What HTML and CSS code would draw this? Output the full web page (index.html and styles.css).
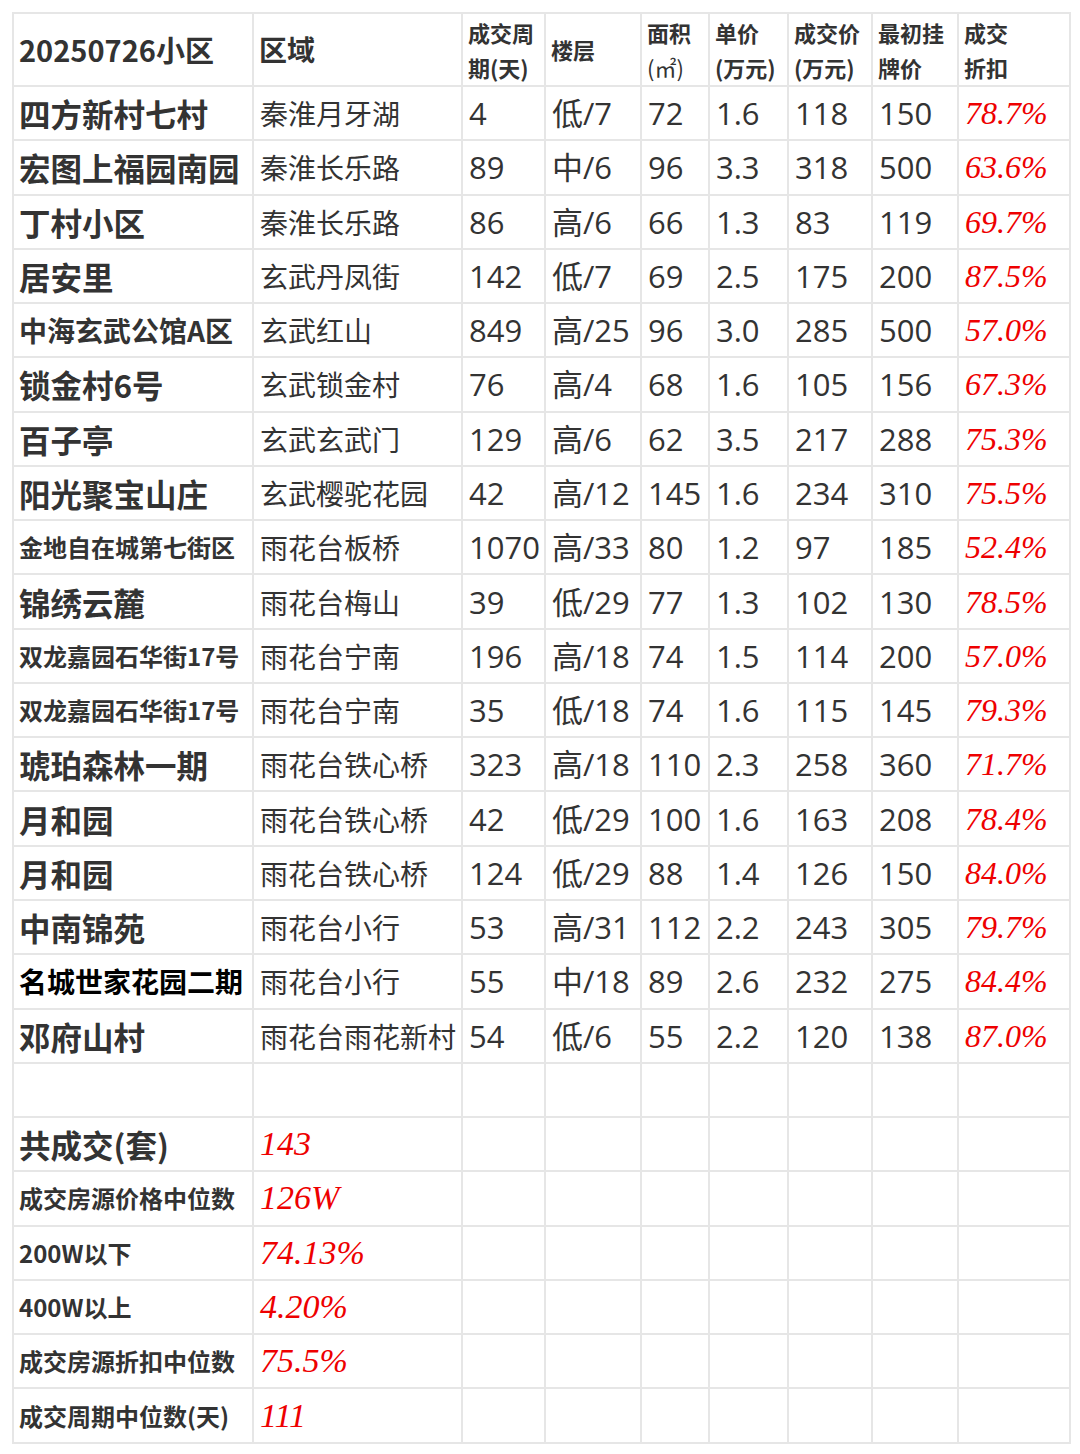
FILE: index.html
```html
<!DOCTYPE html>
<html lang="zh-CN">
<head>
<meta charset="utf-8">
<title>20250726小区成交</title>
<link rel="stylesheet" href="styles.css">
</head>
<body>
<table class="deals">
<colgroup>
<col class="c-name"><col class="c-area"><col class="c-cycle"><col class="c-floor"><col class="c-size"><col class="c-unit"><col class="c-price"><col class="c-list"><col class="c-disc">
</colgroup>
<thead>
<tr class="head">
<th class="h-big">20250726小区</th>
<th class="h-big">区域</th>
<th>成交周<br>期(天)</th>
<th>楼层</th>
<th>面积<br><span class="sq">(㎡)</span></th>
<th>单价<br>(万元)</th>
<th>成交价<br>(万元)</th>
<th>最初挂<br>牌价</th>
<th>成交<br>折扣</th>
</tr>
</thead>
<tbody>
<tr><td class="name">四方新村七村</td><td class="area">秦淮月牙湖</td><td>4</td><td>低/7</td><td>72</td><td>1.6</td><td>118</td><td>150</td><td class="pct">78.7%</td></tr>
<tr><td class="name">宏图上福园南园</td><td class="area">秦淮长乐路</td><td>89</td><td>中/6</td><td>96</td><td>3.3</td><td>318</td><td>500</td><td class="pct">63.6%</td></tr>
<tr><td class="name">丁村小区</td><td class="area">秦淮长乐路</td><td>86</td><td>高/6</td><td>66</td><td>1.3</td><td>83</td><td>119</td><td class="pct">69.7%</td></tr>
<tr><td class="name">居安里</td><td class="area">玄武丹凤街</td><td>142</td><td>低/7</td><td>69</td><td>2.5</td><td>175</td><td>200</td><td class="pct">87.5%</td></tr>
<tr><td class="name mid">中海玄武公馆A区</td><td class="area">玄武红山</td><td>849</td><td>高/25</td><td>96</td><td>3.0</td><td>285</td><td>500</td><td class="pct">57.0%</td></tr>
<tr><td class="name">锁金村6号</td><td class="area">玄武锁金村</td><td>76</td><td>高/4</td><td>68</td><td>1.6</td><td>105</td><td>156</td><td class="pct">67.3%</td></tr>
<tr><td class="name">百子亭</td><td class="area">玄武玄武门</td><td>129</td><td>高/6</td><td>62</td><td>3.5</td><td>217</td><td>288</td><td class="pct">75.3%</td></tr>
<tr><td class="name">阳光聚宝山庄</td><td class="area">玄武樱驼花园</td><td>42</td><td>高/12</td><td>145</td><td>1.6</td><td>234</td><td>310</td><td class="pct">75.5%</td></tr>
<tr><td class="name small">金地自在城第七街区</td><td class="area">雨花台板桥</td><td>1070</td><td>高/33</td><td>80</td><td>1.2</td><td>97</td><td>185</td><td class="pct">52.4%</td></tr>
<tr><td class="name">锦绣云麓</td><td class="area">雨花台梅山</td><td>39</td><td>低/29</td><td>77</td><td>1.3</td><td>102</td><td>130</td><td class="pct">78.5%</td></tr>
<tr><td class="name small">双龙嘉园石华街17号</td><td class="area">雨花台宁南</td><td>196</td><td>高/18</td><td>74</td><td>1.5</td><td>114</td><td>200</td><td class="pct">57.0%</td></tr>
<tr><td class="name small">双龙嘉园石华街17号</td><td class="area">雨花台宁南</td><td>35</td><td>低/18</td><td>74</td><td>1.6</td><td>115</td><td>145</td><td class="pct">79.3%</td></tr>
<tr><td class="name">琥珀森林一期</td><td class="area">雨花台铁心桥</td><td>323</td><td>高/18</td><td>110</td><td>2.3</td><td>258</td><td>360</td><td class="pct">71.7%</td></tr>
<tr><td class="name">月和园</td><td class="area">雨花台铁心桥</td><td>42</td><td>低/29</td><td>100</td><td>1.6</td><td>163</td><td>208</td><td class="pct">78.4%</td></tr>
<tr><td class="name">月和园</td><td class="area">雨花台铁心桥</td><td>124</td><td>低/29</td><td>88</td><td>1.4</td><td>126</td><td>150</td><td class="pct">84.0%</td></tr>
<tr><td class="name">中南锦苑</td><td class="area">雨花台小行</td><td>53</td><td>高/31</td><td>112</td><td>2.2</td><td>243</td><td>305</td><td class="pct">79.7%</td></tr>
<tr><td class="name mid black">名城世家花园二期</td><td class="area">雨花台小行</td><td>55</td><td>中/18</td><td>89</td><td>2.6</td><td>232</td><td>275</td><td class="pct">84.4%</td></tr>
<tr><td class="name">邓府山村</td><td class="area">雨花台雨花新村</td><td>54</td><td>低/6</td><td>55</td><td>2.2</td><td>120</td><td>138</td><td class="pct">87.0%</td></tr>
<tr><td></td><td></td><td></td><td></td><td></td><td></td><td></td><td></td><td></td></tr>
<tr><td class="name">共成交(套)</td><td class="sum">143</td><td></td><td></td><td></td><td></td><td></td><td></td><td></td></tr>
<tr><td class="name small">成交房源价格中位数</td><td class="sum">126W</td><td></td><td></td><td></td><td></td><td></td><td></td><td></td></tr>
<tr><td class="name small">200W以下</td><td class="sum">74.13%</td><td></td><td></td><td></td><td></td><td></td><td></td><td></td></tr>
<tr><td class="name small">400W以上</td><td class="sum">4.20%</td><td></td><td></td><td></td><td></td><td></td><td></td><td></td></tr>
<tr><td class="name small">成交房源折扣中位数</td><td class="sum">75.5%</td><td></td><td></td><td></td><td></td><td></td><td></td><td></td></tr>
<tr><td class="name small">成交周期中位数(天)</td><td class="sum">111</td><td></td><td></td><td></td><td></td><td></td><td></td><td></td></tr>
</tbody>
</table>
</body>
</html>
```
FILE: styles.css
```css
html, body {
  margin: 0;
  padding: 0;
  background: #ffffff;
}

body {
  padding: 12px 0 0 12px;
  font-family: "Open Sans", "Noto Sans CJK SC", sans-serif;
  color: #333333;
}

.deals {
  border-collapse: collapse;
  table-layout: fixed;
  width: 1057px;
}

.c-name { width: 240px; }
.c-area { width: 209px; }
.c-cycle { width: 83px; }
.c-floor { width: 96px; }
.c-size { width: 68px; }
.c-unit { width: 79px; }
.c-price { width: 84px; }
.c-list { width: 86px; }
.c-disc { width: 112px; }

.deals th,
.deals td {
  border: 2px solid #e6e6e6;
  padding: 0 0 0 6px;
  text-align: left;
  vertical-align: middle;
  white-space: nowrap;
  overflow: hidden;
}

.deals td {
  height: 52.28px;
  font-size: 31px;
  line-height: 36px;
  font-weight: 400;
}

.head th {
  height: 71px;
  font-family: "Noto Sans CJK SC", sans-serif;
  font-size: 22px;
  line-height: 35px;
  font-weight: 700;
  color: #333333;
  padding-left: 5px;
}

.head th.h-big {
  font-size: 28px;
}

.head th.h-big:first-child {
  font-size: 29px;
}

.sq {
  font-family: "Noto Sans CJK SC", sans-serif;
  font-weight: 400;
}

.deals td.area {
  font-family: "Noto Sans CJK SC", sans-serif;
  font-size: 28px;
}

.deals td.name {
  font-family: "Noto Sans CJK SC", sans-serif;
  font-weight: 700;
  font-size: 31.5px;
  padding-left: 5px;
}

.deals td.name.mid {
  font-size: 28px;
}

.deals td.name.small {
  font-size: 24px;
}

.deals td.name.black {
  color: #000000;
}

.deals td.pct,
.deals td.sum {
  font-family: "Liberation Serif", serif;
  font-style: italic;
  color: #ee0000;
}

.deals td.pct {
  font-size: 32px;
}

.deals td.sum {
  font-size: 34px;
}
```
